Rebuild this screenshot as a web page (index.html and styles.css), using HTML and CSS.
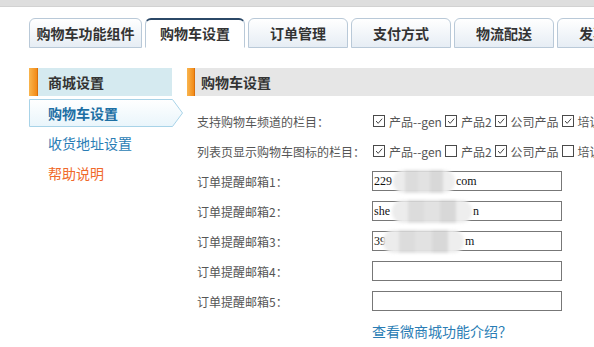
FILE: index.html
```html
<!DOCTYPE html>
<html lang="zh-CN">
<head>
    <meta charset="UTF-8">
    <title>购物车设置</title>
    <link rel="stylesheet" href="styles.css">
</head>
<body>

    <div class="topbar"></div>

    <!-- Tabs -->
    <div class="tabs">
        <div class="tab tab-wide">购物车功能组件</div>
        <div class="tab active">购物车设置</div>
        <div class="tab">订单管理</div>
        <div class="tab">支付方式</div>
        <div class="tab">物流配送</div>
        <div class="tab">发票设置</div>
    </div>

    <div class="main">
        <!-- Left menu -->
        <div class="side">
            <div class="side-head"><span class="bar"></span>商城设置</div>
            <div class="side-item current">
                <svg class="item-shape" viewBox="0 0 154 28" preserveAspectRatio="none">
                    <defs>
                        <linearGradient id="itemBg" x1="0" y1="0" x2="0" y2="1">
                            <stop offset="0" stop-color="#ffffff"/>
                            <stop offset="1" stop-color="#e9f5fb"/>
                        </linearGradient>
                    </defs>
                    <polygon points="0.5,0.5 143.5,0.5 153.5,14 143.5,27.5 0.5,27.5" fill="url(#itemBg)" stroke="#a8d3e8" stroke-width="1"/>
                </svg>
                <span class="item-text">购物车设置</span>
            </div>
            <div class="side-item"><span class="item-text link-blue">收货地址设置</span></div>
            <div class="side-item"><span class="item-text link-orange">帮助说明</span></div>
        </div>

        <!-- Content -->
        <div class="content">
            <div class="content-head"><span class="bar"></span>购物车设置</div>

            <div class="form">
                <div class="row">
                    <div class="label">支持购物车频道的栏目：</div>
                    <div class="checks">
                        <span class="box on"><svg viewBox="0 0 12 12"><path d="M2.5 6 L5 8.8 L9.8 3.2" /></svg></span><span class="ck-text">产品--gen</span>
                        <span class="box on"><svg viewBox="0 0 12 12"><path d="M2.5 6 L5 8.8 L9.8 3.2" /></svg></span><span class="ck-text">产品2</span>
                        <span class="box on"><svg viewBox="0 0 12 12"><path d="M2.5 6 L5 8.8 L9.8 3.2" /></svg></span><span class="ck-text">公司产品</span>
                        <span class="box on"><svg viewBox="0 0 12 12"><path d="M2.5 6 L5 8.8 L9.8 3.2" /></svg></span><span class="ck-text">培训课程</span>
                    </div>
                </div>
                <div class="row">
                    <div class="label">列表页显示购物车图标的栏目：</div>
                    <div class="checks">
                        <span class="box on"><svg viewBox="0 0 12 12"><path d="M2.5 6 L5 8.8 L9.8 3.2" /></svg></span><span class="ck-text">产品--gen</span>
                        <span class="box"></span><span class="ck-text">产品2</span>
                        <span class="box on"><svg viewBox="0 0 12 12"><path d="M2.5 6 L5 8.8 L9.8 3.2" /></svg></span><span class="ck-text">公司产品</span>
                        <span class="box"></span><span class="ck-text">培训课程</span>
                    </div>
                </div>
                <div class="row">
                    <div class="label">订单提醒邮箱1：</div>
                    <div class="field">229<span class="gap g1"></span>com<span class="blur b1"></span></div>
                </div>
                <div class="row">
                    <div class="label">订单提醒邮箱2：</div>
                    <div class="field">she<span class="gap g2"></span>n<span class="blur b2"></span></div>
                </div>
                <div class="row">
                    <div class="label">订单提醒邮箱3：</div>
                    <div class="field">39<span class="gap g3"></span>m<span class="blur b3"></span></div>
                </div>
                <div class="row">
                    <div class="label">订单提醒邮箱4：</div>
                    <div class="field"></div>
                </div>
                <div class="row">
                    <div class="label">订单提醒邮箱5：</div>
                    <div class="field"></div>
                </div>
                <div class="row">
                    <div class="label"></div>
                    <a class="more" href="#">查看微商城功能介绍？</a>
                </div>
            </div>
        </div>
    </div>

</body>
</html>
```

FILE: styles.css
```css
:root {
    --tab-border: #b9c9d8;
    --label-color: #555555;
    --blue: #2a7db5;
    --orange: #f0692a;
}

body {
    margin: 0;
    width: 594px;
    height: 347px;
    overflow: hidden;
    background: #ffffff;
    font-family: "Microsoft YaHei", "Noto Sans CJK SC", sans-serif;
    color: #333333;
}

.topbar {
    height: 6px;
    background: #dedede;
    border-bottom: 1px solid #d2d2d2;
}

/* Tabs */
.tabs {
    display: flex;
    gap: 3px;
    padding: 11px 0 0 29px;
    height: 30px;
    white-space: nowrap;
}

.tab {
    flex: none;
    box-sizing: border-box;
    width: 100px;
    height: 30px;
    border: 1px solid var(--tab-border);
    border-radius: 6px 6px 0 0;
    background: linear-gradient(#ffffff, #e6edf4);
    font-size: 14px;
    font-weight: bold;
    line-height: 28px;
    text-align: center;
}

.tab-wide {
    width: 113px;
}

.tab.active {
    background: #ffffff;
    border-top: 2px solid #2b4867;
    border-bottom-color: #ffffff;
    line-height: 27px;
}

/* Main area */
.main {
    display: flex;
    margin-top: 20px;
    padding-left: 29px;
}

.side {
    flex: none;
    width: 143px;
}

.bar {
    flex: none;
    box-sizing: border-box;
    width: 9px;
    height: 100%;
    background: linear-gradient(to right, #f9b54e, #f28a17);
    border-right: 1px solid #d9700c;
}

.side-head {
    display: flex;
    align-items: center;
    height: 28px;
    background: #d5eaf0;
    font-size: 14px;
    font-weight: bold;
}

.side-head .bar {
    margin-right: 10px;
}

.side-item {
    position: relative;
    display: flex;
    align-items: center;
    height: 28px;
    margin-top: 2px;
    font-size: 14px;
}

.side-head + .side-item {
    margin-top: 3px;
}

.item-shape {
    position: absolute;
    left: 0;
    top: 0;
    width: 154px;
    height: 28px;
}

.item-text {
    position: relative;
    padding-left: 19px;
}

.current .item-text {
    color: #1d6fa4;
    font-weight: bold;
}

.link-blue {
    color: var(--blue);
}

.link-orange {
    color: var(--orange);
}

.content {
    flex: none;
    width: 420px;
    margin-left: 15px;
}

.content-head {
    display: flex;
    align-items: center;
    height: 28px;
    background: #e6e6e6;
    font-size: 14px;
    font-weight: bold;
}

.content-head .bar {
    width: 8px;
    margin-right: 6px;
}

/* Form */
.form {
    padding: 10px 0 0 10px;
}

.row {
    display: flex;
    align-items: center;
    height: 30px;
    white-space: nowrap;
}

.label {
    flex: none;
    width: 175px;
    font-size: 12px;
    color: var(--label-color);
}

.checks {
    display: flex;
    align-items: center;
    font-size: 12px;
    color: var(--label-color);
}

.box {
    flex: none;
    box-sizing: border-box;
    width: 12px;
    height: 12px;
    border: 1px solid #4a4a4a;
    background: #ffffff;
    margin: 0 4px 0 3px;
}

.checks .box:first-child {
    margin-left: 1px;
}

.box svg {
    display: block;
    width: 10px;
    height: 10px;
}

.box path {
    fill: none;
    stroke: #333333;
    stroke-width: 1.1;
}

.field {
    position: relative;
    flex: none;
    box-sizing: border-box;
    width: 190px;
    height: 20px;
    border: 1px solid #777777;
    padding-left: 1px;
    font-family: "Liberation Serif", serif;
    font-size: 12px;
    line-height: 18px;
    color: #111111;
}

.gap {
    display: inline-block;
}

.g1 { width: 64px; }
.g2 { width: 83px; }
.g3 { width: 79px; }

/* pixelated privacy blur over the addresses */
.blur {
    position: absolute;
    top: -2px;
    height: 23px;
    border-radius: 11px;
    background: linear-gradient(to right, #ececec 0 20%, #dcdcdc 20% 40%, #e2e2e2 40% 60%, #d8d8d8 60% 80%, #eeeeee 80% 100%);
    filter: blur(1.5px);
}

.b1 { left: 20px; width: 62px; }
.b2 { left: 19px; width: 80px; }
.b3 { left: 10px; width: 81px; }

.more {
    font-size: 14px;
    color: var(--blue);
    text-decoration: none;
}
```
